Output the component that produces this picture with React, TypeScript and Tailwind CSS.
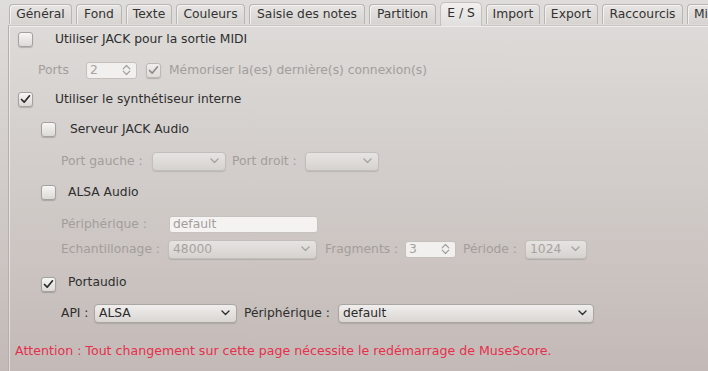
import React from 'react';

const tabs = [
  { label: 'Général', w: 'w-[63px]' },
  { label: 'Fond', w: 'w-[46px]' },
  { label: 'Texte', w: 'w-[46px]' },
  { label: 'Couleurs', w: 'w-[69px]' },
  { label: 'Saisie des notes', w: 'w-[116px]' },
  { label: 'Partition', w: 'w-[67px]' },
  { label: 'E / S', w: 'w-[42px]', active: true },
  { label: 'Import', w: 'w-[54px]' },
  { label: 'Export', w: 'w-[54px]' },
  { label: 'Raccourcis', w: 'w-[81px]' },
  { label: 'Mi', w: 'w-[40px] justify-start pl-[6px]' },
];

const CheckBox = ({ checked, disabled }: { checked?: boolean; disabled?: boolean }) => (
  <span
    className={
      'flex h-[15px] w-[15px] shrink-0 items-center justify-center rounded-[3px] border shadow-[0_1px_1px_rgba(0,0,0,0.18)] ' +
      (disabled
        ? 'border-[#bdb9b5] bg-linear-to-b from-[#efeeec] to-[#dfdcda]'
        : 'border-[#a5a19d] bg-linear-to-b from-[#f7f6f5] to-[#dcd9d6]')
    }
  >
    {checked && (
      <svg width="11" height="10" viewBox="0 0 11 10">
        <path
          d="M1.5 5.5 L4.2 8.2 L9.5 1.8"
          fill="none"
          stroke={disabled ? '#8f8b87' : '#2a2a2a'}
          strokeWidth="1.7"
          strokeLinecap="round"
          strokeLinejoin="round"
        />
      </svg>
    )}
  </span>
);

const Chevron = ({ disabled }: { disabled?: boolean }) => (
  <svg width="9" height="6" viewBox="0 0 9 6" className="shrink-0">
    <path
      d="M1 1 L4.5 4.5 L8 1"
      fill="none"
      stroke={disabled ? '#a8a4a0' : '#2f2f2f'}
      strokeWidth="1.4"
      strokeLinecap="round"
      strokeLinejoin="round"
    />
  </svg>
);

const SpinArrows = () => (
  <svg width="9" height="12" viewBox="0 0 9 12" className="shrink-0">
    <path
      d="M1.2 4.8 L4.5 1.5 L7.8 4.8 M1.2 7.2 L4.5 10.5 L7.8 7.2"
      fill="none"
      stroke="#a29e9a"
      strokeWidth="1.2"
      strokeLinecap="round"
      strokeLinejoin="round"
    />
  </svg>
);

const Combo = ({ w, value, disabled }: { w: string; value?: string; disabled?: boolean }) => (
  <div
    className={
      'flex h-[19px] shrink-0 items-center justify-between rounded-[4px] border pl-[4px] pr-[6px] shadow-[0_1px_1px_rgba(0,0,0,0.12)] ' +
      w +
      (disabled
        ? ' border-[#c2beba] bg-linear-to-b from-[#e6e4e2] to-[#d6d2cf] text-[#a6a29e]'
        : ' border-[#aaa6a2] bg-linear-to-b from-[#f0efed] to-[#d9d5d2] text-[#2b2b2b]')
    }
  >
    <span className="leading-none">{value}</span>
    <Chevron disabled={disabled} />
  </div>
);

const Spin = ({ value }: { value: string }) => (
  <div className="flex h-[17px] w-[51px] shrink-0 items-center justify-between rounded-[3px] border border-[#c4c0bc] bg-[#f1f0ef] pl-[3px] pr-[5px] text-[#a6a29e]">
    <span className="leading-none">{value}</span>
    <SpinArrows />
  </div>
);

export default function App() {
  return (
    <div
      className="h-[371px] w-[708px] overflow-hidden bg-linear-to-b from-[#dfdddb] to-[#c3bab7] text-[12.3px] text-[#2e2e2e]"
      style={{ fontFamily: '"DejaVu Sans", sans-serif' }}
    >
      {/* tab bar */}
      <div className="flex h-[25px] items-end gap-[4px] pl-[9px]">
        {tabs.map((t) =>
          t.active ? (
            <div
              key={t.label}
              className={
                'relative z-10 -mb-px flex h-[24px] shrink-0 items-center justify-center rounded-t-[5px] border border-b-0 border-[#c3c0bc] bg-linear-to-b from-[#f1f0ef] to-[#e1dfdd] pb-[3px] text-[#2e2e2e] ' +
                t.w
              }
            >
              {t.label}
            </div>
          ) : (
            <div
              key={t.label}
              className={
                'mb-[1px] flex h-[20px] shrink-0 items-center justify-center rounded-t-[4px] border border-b-0 border-[#b9b5b1] bg-linear-to-b from-[#e7e5e3] to-[#d6d3d0] text-[#333] shadow-[inset_1px_1px_0_rgba(255,255,255,0.6)] ' +
                t.w
              }
            >
              {t.label}
            </div>
          )
        )}
      </div>

      {/* panel */}
      <div className="ml-[8px] flex h-[346px] flex-col border-l border-t border-l-[#b3afab] border-t-[#c9c6c3] shadow-[inset_1px_1px_0_rgba(255,255,255,0.5)]">
        <div className="ml-[9px] mt-[3px] flex h-[20px] items-center">
          <CheckBox />
          <span className="ml-[22px]">Utiliser JACK pour la sortie MIDI</span>
        </div>

        <div className="ml-[29px] mt-[11px] flex h-[20px] items-center text-[#a29e9a]">
          <span className="w-[48px]">Ports</span>
          <Spin value="2" />
          <span className="ml-[9px]">
            <CheckBox checked disabled />
          </span>
          <span className="ml-[8px]">Mémoriser la(es) dernière(s) connexion(s)</span>
        </div>

        <div className="ml-[9px] mt-[9px] flex h-[20px] items-center">
          <CheckBox checked />
          <span className="ml-[22px]">Utiliser le synthétiseur interne</span>
        </div>

        <div className="ml-[32px] mt-[10px] flex h-[20px] items-center">
          <CheckBox />
          <span className="ml-[14px]">Serveur JACK Audio</span>
        </div>

        <div className="ml-[52px] mt-[12px] flex h-[20px] items-center text-[#a29e9a]">
          <span className="w-[91px]">Port gauche :</span>
          <Combo w="w-[74px]" disabled />
          <span className="ml-[6px] w-[73px]">Port droit :</span>
          <Combo w="w-[74px]" disabled />
        </div>

        <div className="ml-[32px] mt-[11px] flex h-[20px] items-center">
          <CheckBox />
          <span className="ml-[12px]">ALSA Audio</span>
        </div>

        <div className="ml-[52px] mt-[12px] flex h-[20px] items-center text-[#a29e9a]">
          <span className="w-[108px]">Périphérique :</span>
          <div className="flex h-[17px] w-[149px] items-center rounded-[3px] border border-[#c6c2be] bg-[#f4f3f2] pl-[3px] leading-none">
            default
          </div>
        </div>

        <div className="ml-[52px] mt-[5px] flex h-[20px] items-center text-[#a29e9a]">
          <span className="w-[107px]">Echantillonage :</span>
          <Combo w="w-[149px]" value="48000" disabled />
          <span className="ml-[8px] w-[80px]">Fragments :</span>
          <Spin value="3" />
          <span className="ml-[7px] w-[62px]">Période :</span>
          <Combo w="w-[62px]" value="1024" disabled />
        </div>

        <div className="ml-[32px] mt-[15px] flex h-[20px] items-center">
          <CheckBox checked />
          <span className="ml-[12px] -mt-[4px]">Portaudio</span>
        </div>

        <div className="ml-[52px] mt-[9px] flex h-[20px] items-center">
          <span className="w-[33px]">API :</span>
          <Combo w="w-[143px]" value="ALSA" />
          <span className="ml-[7px] w-[94px]">Périphérique :</span>
          <Combo w="w-[256px]" value="default" />
        </div>

        <div className="ml-[6px] mt-[18px] flex h-[20px] items-center text-[12.6px] text-[#e5304d]">
          Attention : Tout changement sur cette page nécessite le redémarrage de MuseScore.
        </div>
      </div>
    </div>
  );
}
